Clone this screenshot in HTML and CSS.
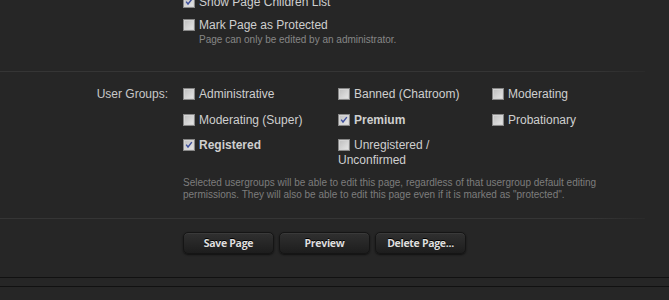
FILE: index.html
```html
<!DOCTYPE html>
<html lang="en">
<head>
    <meta charset="UTF-8">
    <meta name="viewport" content="width=device-width, initial-scale=1.0">
    <title>Edit Page</title>
    <link rel="stylesheet" href="styles.css">
</head>
<body>
    <div class="form">
        <div class="row options">
            <div class="label"></div>
            <div class="control">
                <label class="check"><span class="box checked"><svg viewBox="0 0 12 12"><path d="M2.6 5.6 L4.8 8.4 L9.4 2.6"/></svg></span>Show Page Children List</label>
                <label class="check"><span class="box"></span>Mark Page as Protected</label>
                <p class="hint">Page can only be edited by an administrator.</p>
            </div>
        </div>

        <div class="sep"></div>

        <div class="row groups">
            <div class="label">User Groups:</div>
            <div class="control">
                <div class="group-grid">
                    <label class="check"><span class="box"></span>Administrative</label>
                    <label class="check"><span class="box"></span>Banned (Chatroom)</label>
                    <label class="check"><span class="box"></span>Moderating</label>
                    <label class="check"><span class="box"></span>Moderating (Super)</label>
                    <label class="check on"><span class="box checked"><svg viewBox="0 0 12 12"><path d="M2.6 5.6 L4.8 8.4 L9.4 2.6"/></svg></span>Premium</label>
                    <label class="check"><span class="box"></span>Probationary</label>
                    <label class="check on"><span class="box checked"><svg viewBox="0 0 12 12"><path d="M2.6 5.6 L4.8 8.4 L9.4 2.6"/></svg></span>Registered</label>
                    <label class="check"><span class="box"></span>Unregistered / Unconfirmed</label>
                </div>
                <p class="explain">Selected usergroups will be able to edit this page, regardless of that usergroup default editing permissions. They will also be able to edit this page even if it is marked as "protected".</p>
            </div>
        </div>

        <div class="sep"></div>

        <div class="actions">
            <button>Save Page</button>
            <button>Preview</button>
            <button>Delete Page...</button>
        </div>
    </div>
    <div class="footer-bar"></div>
</body>
</html>
```

FILE: styles.css
```css
body {
    margin: 0;
    background-color: #262626;
    font-family: "Liberation Sans", Arial, sans-serif;
    font-size: 12px;
    color: #cfcfcf;
    overflow: hidden;
    height: 300px;
}
.form {
    margin-top: -5px;
}
.row {
    display: flex;
}
.label {
    width: 168px;
    flex: none;
    text-align: right;
    line-height: 15px;
    color: #c8c8c8;
}
.control {
    margin-left: 15px;
}
.options {
    padding-bottom: 25px;
}
.options .check + .check {
    margin-top: 8px;
}
.check {
    display: block;
    line-height: 15px;
}
.check.on {
    font-weight: bold;
}
.box {
    display: inline-block;
    box-sizing: border-box;
    width: 12px;
    height: 12px;
    margin: 1px 4px 0 0;
    vertical-align: top;
    border: 1px solid #878787;
    background: linear-gradient(135deg, #bdbdbd, #e8e8e8);
    box-shadow: inset 0 0 0 1px #d4d4d4;
}
.box svg {
    display: block;
    width: 10px;
    height: 10px;
}
.box path {
    fill: none;
    stroke: #3d4f9c;
    stroke-width: 1.7;
}
.hint {
    margin: 1px 0 0 16px;
    font-size: 10px;
    line-height: 12px;
    color: #868686;
}
.sep {
    width: 645px;
    height: 1px;
    background: linear-gradient(to right, #353535 92%, #2a2a2a);
}
.groups {
    padding: 15px 0 17px;
}
.group-grid {
    display: grid;
    grid-template-columns: 155px 154px 150px;
    row-gap: 10.5px;
}
.explain {
    margin: 9px 0 0;
    width: 425px;
    font-size: 10px;
    line-height: 12px;
    color: #7d7d7d;
}
.actions {
    display: flex;
    gap: 5px;
    padding: 13px 0 23px 183px;
}
button {
    width: 91px;
    height: 22px;
    padding: 0;
    border: 1px solid #151515;
    border-radius: 5px;
    background: linear-gradient(#303030, #1d1d1d);
    box-shadow: 0 1px 2px rgba(0, 0, 0, 0.6), inset 0 1px 0 #3a3a3a;
    color: #dedede;
    font-family: "Open Sans", sans-serif;
    font-size: 10.5px;
    font-weight: 700;
    letter-spacing: -0.3px;
    text-shadow: 0 -1px 0 #000;
    cursor: pointer;
}
.footer-bar {
    height: 8px;
    border-top: 1px solid #111;
    border-bottom: 1px solid #111;
}
```
